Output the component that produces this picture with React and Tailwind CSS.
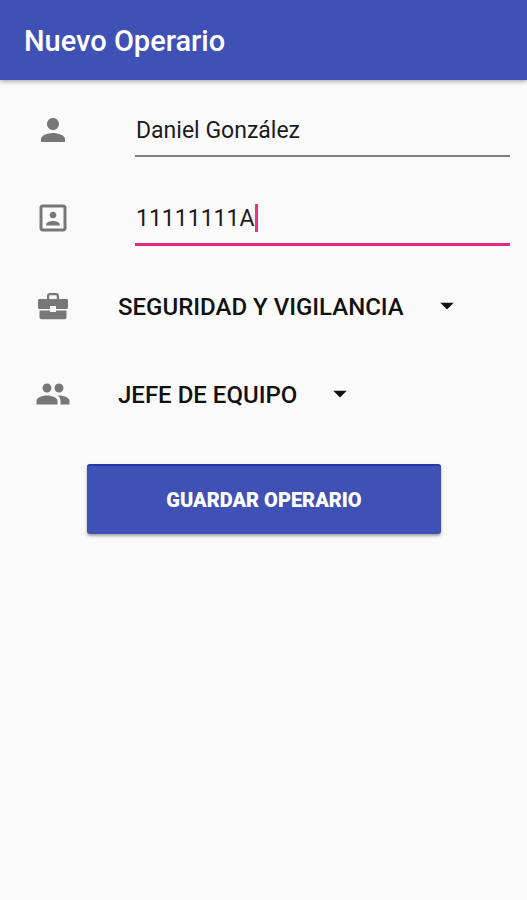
const ICONS = {
  person:
    "M12 12c2.21 0 4-1.79 4-4s-1.79-4-4-4-4 1.79-4 4 1.79 4 4 4zm0 2c-2.67 0-8 1.34-8 4v2h16v-2c0-2.66-5.33-4-8-4z",
  portrait:
    "M12 12.25c1.24 0 2.25-1.01 2.25-2.25S13.24 7.75 12 7.75 9.75 8.76 9.75 10s1.01 2.25 2.25 2.25zm4.5 4c0-1.5-3-2.25-4.5-2.25s-4.5.75-4.5 2.25V17h9v-.75zM19 3H5c-1.1 0-2 .9-2 2v14c0 1.1.9 2 2 2h14c1.1 0 2-.9 2-2V5c0-1.1-.9-2-2-2zm0 16H5V5h14v14z",
  briefcase:
    "M10 16v-1H3v4.5c0 .8.6 1.3 1.3 1.3h15.4c.7 0 1.3-.5 1.3-1.3V15h-7v1h-4zM21 7.3h-5V5.2c0-1-.8-1.9-1.9-1.9H9.900c-1.100 0-1.900.9-1.900 1.900v2.100H3c-.6 0-1 .4-1 1V13c0 .6.4 1 1 1h7v-2h4v2h7c.6 0 1-.4 1-1V8.300c0-.6-.4-1-1-1zm-6.500 0h-5V5.300c0-.3.2-.5.5-.5h4c.3 0 .5.2.5.5v2z",
  people:
    "M16 11c1.66 0 2.99-1.34 2.99-3S17.66 5 16 5c-1.66 0-3 1.34-3 3s1.34 3 3 3zm-8 0c1.66 0 2.99-1.34 2.99-3S9.66 5 8 5C6.34 5 5 6.34 5 8s1.34 3 3 3zm0 2c-2.33 0-7 1.17-7 3.5V19h14v-2.5c0-2.33-4.67-3.5-7-3.5zm8 0c-.29 0-.62.02-.97.05 1.16.84 1.97 1.97 1.97 3.45V19h6v-2.5c0-2.33-4.67-3.5-7-3.5z",
};

function FieldIcon({ name }) {
  return (
    <svg viewBox="0 0 24 24" className="size-9 shrink-0 fill-[#777777]" aria-hidden="true">
      <path d={ICONS[name]} />
    </svg>
  );
}

function TextRow({ id, icon, label, value, active }) {
  return (
    <div className="flex h-22 items-center gap-16 pr-[17px] pl-[35px]">
      <label htmlFor={id} aria-label={label}>
        <FieldIcon name={icon} />
      </label>
      <div className="relative min-w-0 flex-1">
        <input
          id={id}
          type="text"
          defaultValue={value}
          className={
            active
              ? "block h-14 w-full border-b-3 border-[#e62a7d] bg-transparent pt-1 pl-px text-[23px] text-[#1c1c1c] outline-none"
              : "block h-[54px] w-full border-b-2 border-[#808080] bg-transparent pt-0.5 pl-px text-[23px] text-[#1c1c1c] outline-none"
          }
        />
        {active && (
          <span className="absolute top-3.5 left-30 h-7 w-[3px] bg-[#f0307f]" aria-hidden="true" />
        )}
      </div>
    </div>
  );
}

function SelectRow({ id, icon, label, value }) {
  return (
    <div className="flex h-22 items-center gap-[47px] pr-4 pl-[35px]">
      <label htmlFor={id} aria-label={label}>
        <FieldIcon name={icon} />
      </label>
      <div className="relative">
        <select
          id={id}
          defaultValue={value}
          className="field-sizing-content block h-14 appearance-none bg-transparent pt-0.5 pr-15 text-2xl font-medium text-[#111111] outline-none"
        >
          <option value={value}>{value}</option>
        </select>
        <svg
          viewBox="0 0 14 7"
          className="pointer-events-none absolute top-1/2 right-2.5 h-[7px] w-3.5 -translate-y-1/2 fill-[#111111]"
          aria-hidden="true"
        >
          <path d="M0 0h14L7 7z" />
        </svg>
      </div>
    </div>
  );
}

export default function App() {
  return (
    <div className="min-h-screen bg-[#fafafa] font-[Roboto,sans-serif]">
      <header className="flex h-20 items-center bg-[#3f51b5] px-6 pt-1 shadow-[0_1px_5px_rgba(0,0,0,0.4)]">
        <h1 className="text-[29px] font-medium text-white">Nuevo Operario</h1>
      </header>
      <form className="pt-1.5" onSubmit={(e) => e.preventDefault()}>
        <TextRow id="nombre" icon="person" label="Nombre" value="Daniel González" />
        <TextRow id="dni" icon="portrait" label="DNI" value="11111111A" active />
        <SelectRow id="departamento" icon="briefcase" label="Departamento" value="SEGURIDAD Y VIGILANCIA" />
        <SelectRow id="puesto" icon="people" label="Puesto" value="JEFE DE EQUIPO" />
        <div className="pt-[26px] pr-[86px] pl-[87px]">
          <button
            type="submit"
            className="h-[70px] w-full rounded-[3px] border-t-2 border-[#1f3ba3] bg-[#3f51b5] text-xl font-black text-white shadow-[0_2px_3px_rgba(0,0,0,0.35)]"
          >
            GUARDAR OPERARIO
          </button>
        </div>
      </form>
    </div>
  );
}
